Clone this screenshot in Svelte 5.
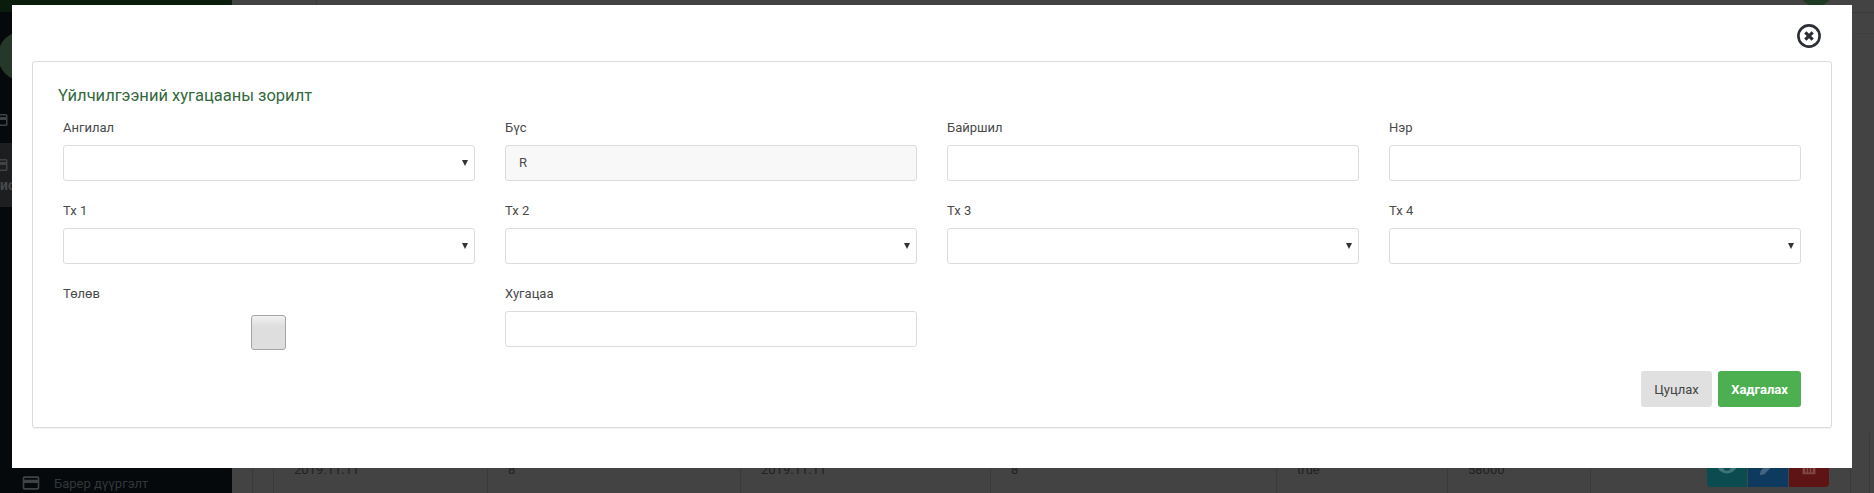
<script>
  const rows = [
    [
      { label: "Ангилал", type: "select" },
      { label: "Бүс", type: "input", value: "R", readonly: true },
      { label: "Байршил", type: "input" },
      { label: "Нэр", type: "input" }
    ],
    [
      { label: "Тх 1", type: "select" },
      { label: "Тх 2", type: "select" },
      { label: "Тх 3", type: "select" },
      { label: "Тх 4", type: "select" }
    ],
    [
      { label: "Төлөв", type: "check" },
      { label: "Хугацаа", type: "input" }
    ]
  ];

  // dimmed table row behind the modal
  const cells = [
    { w: 21, text: "" },
    { w: 214, text: "2019.11.11" },
    { w: 253, text: "8" },
    { w: 250, text: "2019.11.11" },
    { w: 286, text: "8" },
    { w: 171, text: "true" },
    { w: 143, text: "58000" }
  ];
</script>

<div class="page">
  <aside class="sidebar">
    <div class="side-top"></div>
    <div class="avatar"></div>
    <div class="side-item first">
      <svg class="card-icon" viewBox="0 0 24 24"><path d="M20 4H4a2 2 0 0 0-2 2v12a2 2 0 0 0 2 2h16a2 2 0 0 0 2-2V6a2 2 0 0 0-2-2zm0 14H4v-6h16zm0-10H4V6h16z" /></svg>
    </div>
    <div class="side-item active">
      <svg class="card-icon" viewBox="0 0 24 24"><path d="M20 4H4a2 2 0 0 0-2 2v12a2 2 0 0 0 2 2h16a2 2 0 0 0 2-2V6a2 2 0 0 0-2-2zm0 14H4v-6h16zm0-10H4V6h16z" /></svg>
      <span>ис</span>
    </div>
    <div class="side-link">
      <svg class="card-icon" viewBox="0 0 24 24"><path d="M20 4H4a2 2 0 0 0-2 2v12a2 2 0 0 0 2 2h16a2 2 0 0 0 2-2V6a2 2 0 0 0-2-2zm0 14H4v-6h16zm0-10H4V6h16z" /></svg>
      <span>Барер дүүргэлт</span>
    </div>
  </aside>
  <main class="content">
    <div class="topbar">
      <span class="brand-cell"></span>
      <span class="user"></span>
    </div>
    <div class="subbar"></div>
    <div class="table-row">
      {#each cells as c}
        <span class="cell" style="width: {c.w}px">{c.text}</span>
      {/each}
      <span class="cell last">
        <span class="row-actions">
          <i class="teal">
            <svg viewBox="0 0 24 24" width="22" height="22"><path d="M12 5C7 5 3 8.500 1 12c2 3.500 6 7 11 7s9-3.500 11-7c-2-3.500-6-7-11-7zm0 11a4 4 0 1 1 0-8 4 4 0 0 1 0 8z" /></svg>
          </i>
          <i class="blue">
            <svg viewBox="0 0 24 24" width="22" height="22"><path d="M3 21l1-5L16 4l4 4L8 20z" /></svg>
          </i>
          <i class="red">
            <svg viewBox="0 0 24 24" width="22" height="22"><path d="M5 4h14v16H5zM8 6v12h1.500V6zm3.200 0v12h1.500V6zm3.300 0v12H16V6z" fill-rule="evenodd" /></svg>
          </i>
        </span>
      </span>
      <span class="cell gutter"></span>
    </div>
  </main>
</div>

<div class="modal">
  <button class="close" aria-label="close">
    <svg viewBox="0 0 24 24" width="24" height="24">
      <circle cx="12" cy="12" r="10.600" fill="none" stroke="#2c3036" stroke-width="2.600" />
      <path d="M8.300 8.300l7.400 7.400M15.700 8.300l-7.400 7.400" stroke="#2c3036" stroke-width="3.200" fill="none" />
    </svg>
  </button>
  <section class="card">
    <h4>Үйлчилгээний хугацааны зорилт</h4>
    {#each rows as row}
      <div class="row">
        {#each row as f}
          <div class="field">
            <label>{f.label}</label>
            {#if f.type === "check"}
              <div class="check-wrap"><span class="check"></span></div>
            {:else if f.type === "select"}
              <div class="control select"><span class="caret"></span></div>
            {:else}
              <div class="control" class:readonly={f.readonly}>{f.value ?? ""}</div>
            {/if}
          </div>
        {/each}
      </div>
    {/each}
    <div class="actions">
      <button class="btn cancel">Цуцлах</button>
      <button class="btn save">Хадгалах</button>
    </div>
  </section>
</div>

<style>
  :global(body) {
    margin: 0;
    background: #434343;
    font-family: Roboto, "Liberation Sans", sans-serif;
    overflow: hidden;
  }

  .page {
    display: flex;
    width: 1874px;
    height: 493px;
    overflow: hidden;
  }

  .sidebar {
    width: 232px;
    flex: none;
    background: #05090b;
    display: flex;
    flex-direction: column;
    overflow: hidden;
  }

  .side-top {
    height: 12px;
    background: #0a1d0c;
  }

  .avatar {
    width: 50px;
    height: 50px;
    margin: 19px 0 0 -2px;
    border-radius: 50%;
    background: #26382a;
  }

  .side-item {
    height: 64px;
  }

  .side-item.first {
    margin-top: 30px;
    height: 32px;
  }

  .side-item.active {
    background: #1c1e1f;
    font-size: 14px;
    font-weight: 700;
    line-height: 16px;
    color: #47494b;
  }

  .side-item.active span {
    display: block;
    margin-top: 3px;
  }

  .card-icon {
    width: 18px;
    height: 18px;
    fill: #404345;
    display: block;
    margin-left: -9px;
  }

  .side-item.active .card-icon {
    padding-top: 13px;
  }

  .side-link {
    margin-top: auto;
    height: 20px;
    display: flex;
    align-items: center;
    gap: 13px;
    padding-left: 21px;
    font-size: 13px;
    color: #34373a;
  }

  .side-link .card-icon {
    margin-left: 0;
    width: 20px;
    height: 20px;
  }

  .content {
    flex: 1;
    display: flex;
    flex-direction: column;
    padding-left: 20px;
    min-width: 0;
  }

  .topbar {
    height: 12px;
    margin-left: -20px;
    display: flex;
    justify-content: space-between;
    border-bottom: 1px solid #3a3a3a;
  }

  .brand-cell {
    width: 84px;
    border-right: 1px solid #3a3a3a;
  }

  .user {
    width: 36px;
    height: 36px;
    margin: -30px 40px 0 0;
    border-radius: 50%;
    background: #1f3a22;
  }

  .subbar {
    height: 20px;
    border-bottom: 1px solid #3f3f3f;
  }

  .table-row {
    display: flex;
    height: 60px;
    margin-top: auto;
    font-size: 13px;
    color: #222;
    line-height: 20px;
  }

  .cell {
    flex: none;
    border-left: 1px solid #3a3a3a;
    box-sizing: border-box;
    padding: 27px 0 0 20px;
  }

  .cell:first-child {
    padding: 0;
  }

  .cell.last {
    width: 260px;
    padding: 22px 0 0 116px;
  }

  .cell.gutter {
    width: 20px;
    padding: 0;
    border-right: 1px solid #3a3a3a;
  }

  .row-actions {
    display: flex;
    width: 122px;
    height: 32px;
    border-radius: 0 0 4px 4px;
    overflow: hidden;
  }

  .row-actions i {
    flex: 1;
    display: flex;
    justify-content: center;
    align-items: flex-end;
    padding-bottom: 9px;
    box-sizing: border-box;
    border-left: 1px solid #3c4a50;
  }

  .row-actions i:first-child {
    border-left: 0;
  }

  .row-actions svg {
    display: block;
    fill: rgba(255, 255, 255, 0.22);
  }

  .teal { background: #0a4c50; }
  .blue { background: #0d3a5e; }
  .red { background: #5e1414; }

  .modal {
    position: fixed;
    left: 12px;
    top: 5px;
    width: 1840px;
    height: 463px;
    box-sizing: border-box;
    padding: 56px 20px 0;
    background: #fff;
    color: #4a4a4a;
  }

  .close {
    position: absolute;
    right: 31px;
    top: 19px;
    padding: 0;
    border: 0;
    background: none;
    width: 24px;
    height: 24px;
  }

  .close svg {
    display: block;
  }

  .card {
    height: 367px;
    box-sizing: border-box;
    border: 1px solid #dcdcdc;
    border-radius: 3px;
    padding: 24px 30px 0;
    box-shadow: 0 1px 1px rgba(0, 0, 0, 0.05);
  }

  h4 {
    margin: 0 0 6px -5px;
    font-size: 16.500px;
    font-weight: 400;
    line-height: 20px;
    color: #33693d;
  }

  .row {
    display: grid;
    grid-template-columns: repeat(4, 412px);
    column-gap: 30px;
    height: 83px;
  }

  label {
    display: block;
    font-size: 13px;
    line-height: 16px;
    margin: 8px 0 9px;
    color: #4a4a4a;
  }

  .control {
    height: 36px;
    box-sizing: border-box;
    border: 1px solid #dcdcdc;
    border-radius: 3px;
    padding: 0 13px;
    font-size: 13px;
    line-height: 34px;
    position: relative;
  }

  .readonly {
    background: #f8f8f8;
  }

  .caret {
    position: absolute;
    right: 6px;
    top: 14px;
    border-left: 3px solid transparent;
    border-right: 3px solid transparent;
    border-top: 6px solid #333;
  }

  .check-wrap {
    display: flex;
    justify-content: center;
    padding-top: 4px;
  }

  .check {
    width: 35px;
    height: 35px;
    box-sizing: border-box;
    margin-left: -1px;
    border: 1px solid #a4a4a4;
    border-radius: 3px;
    background: linear-gradient(#f2f2f2, #dedede 30%, #dedede);
  }

  .actions {
    display: flex;
    justify-content: flex-end;
    gap: 6px;
    margin-top: 10px;
  }

  .btn {
    height: 36px;
    border: 0;
    border-radius: 3px;
    font-family: inherit;
    font-size: 13px;
    padding: 0;
  }

  .cancel {
    width: 71px;
    background: #e0e0e0;
    color: #444;
  }

  .save {
    width: 83px;
    background: #4caf50;
    color: #fff;
    font-weight: 700;
  }
</style>
